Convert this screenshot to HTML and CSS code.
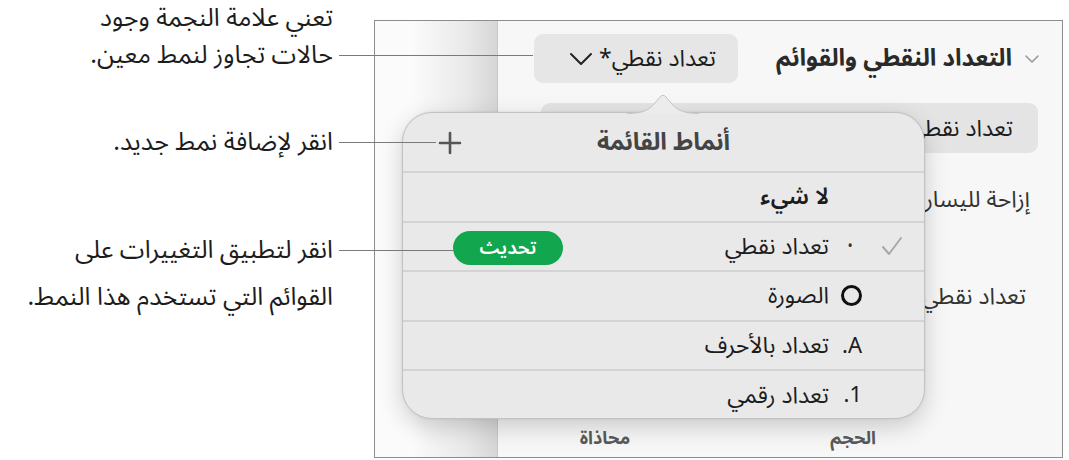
FILE: index.html
```html
<!DOCTYPE html>
<html lang="ar">
<head>
    <meta charset="UTF-8">
    <title>أنماط القائمة</title>
    <link rel="stylesheet" href="styles.css">
</head>
<body>
    <div class="page">
        <div class="notes">
            <div class="note note-star">
                <div class="note-text">تعني علامة النجمة وجود<br>حالات تجاوز لنمط معين.</div>
                <span class="leader leader-star"></span>
            </div>
            <div class="note note-add">
                <div class="note-text">انقر لإضافة نمط جديد.</div>
                <span class="leader leader-add"></span>
            </div>
            <div class="note note-update">
                <div class="note-text">انقر لتطبيق التغييرات على<br>القوائم التي تستخدم هذا النمط.</div>
                <span class="leader leader-update"></span>
            </div>
        </div>

        <div class="frame">
            <div class="sidebar"></div>
            <div class="inspector">
                <div class="section-head">
                    <svg class="section-chevron" width="16" height="10" viewBox="0 0 16 10"><polyline points="2,2 8,8 14,2" fill="none" stroke="#9a9a9a" stroke-width="1.6" stroke-linecap="round" stroke-linejoin="round"/></svg>
                    <span class="section-title">التعداد النقطي والقوائم</span>
                    <div class="style-btn">
                        <span>تعداد نقطي*</span>
                        <svg width="24" height="14" viewBox="0 0 24 14"><polyline points="2,2 12,12 22,2" fill="none" stroke="#222" stroke-width="2" stroke-linecap="round" stroke-linejoin="round"/></svg>
                    </div>
                </div>
                <div class="wide-btn">تعداد نقطي</div>
                <div class="insp-row row-indent">إزاحة لليسار</div>
                <div class="insp-row row-bullet">تعداد نقطي</div>
                <div class="insp-foot">
                    <span>الحجم</span>
                    <span>محاذاة</span>
                </div>
            </div>

            <div class="popover">
                <svg class="popover-arrow" width="72" height="26" viewBox="0 0 72 26">
                    <path d="M0 25.5 C16 25.5 22 22 28 15 L33 9 Q36 5.5 39 9 L44 15 C50 22 56 25.5 72 25.5" fill="#ececec" stroke="#c4c4c4" stroke-width="1"/>
                </svg>
                <div class="pop-head">
                    <svg class="pop-plus" width="26" height="26" viewBox="0 0 26 26"><path d="M13 3 V23 M3 13 H23" stroke="#555" stroke-width="2.6" stroke-linecap="round"/></svg>
                    <span class="pop-title">أنماط القائمة</span>
                </div>
                <div class="pop-row">
                    <span class="check"></span>
                    <span class="marker"></span>
                    <span class="label label-strong">لا شيء</span>
                </div>
                <div class="pop-row">
                    <span class="check">
                        <svg width="22" height="20" viewBox="0 0 22 20"><polyline points="2,11 8,18 20,2" fill="none" stroke="#a8a8a8" stroke-width="2" stroke-linecap="round" stroke-linejoin="round"/></svg>
                    </span>
                    <span class="marker marker-dot">•</span>
                    <span class="label">تعداد نقطي</span>
                    <span class="update-btn">تحديث</span>
                </div>
                <div class="pop-row">
                    <span class="check"></span>
                    <span class="marker"><span class="ring"></span></span>
                    <span class="label">الصورة</span>
                </div>
                <div class="pop-row">
                    <span class="check"></span>
                    <span class="marker">A.</span>
                    <span class="label">تعداد بالأحرف</span>
                </div>
                <div class="pop-row last">
                    <span class="check"></span>
                    <span class="marker">1.</span>
                    <span class="label">تعداد رقمي</span>
                </div>
            </div>
        </div>
    </div>
</body>
</html>
```

FILE: styles.css
```css
:root {
    --ink: #1c1c1c;
    --muted: #555555;
    --leader: #7a7a7a;
    --pop-bg: #e9e9e9;
    --pop-line: #d3d3d3;
    --green: #12a64f;
}

body {
    margin: 0;
    background: #ffffff;
    color: var(--ink);
    font-family: "Noto Sans Arabic", "DejaVu Sans", sans-serif;
}

.page {
    width: 1069px;
    height: 460px;
    display: flex;
    overflow: hidden;
}

/* callouts on the left */
.notes {
    width: 374px;
    flex-shrink: 0;
    position: relative;
    z-index: 3;
}

.note {
    display: flex;
    align-items: flex-end;
    direction: ltr;
}

.note-text {
    width: 333px;
    flex-shrink: 0;
    text-align: right;
    direction: rtl;
    font-size: 25px;
    line-height: 37px;
    white-space: nowrap;
}

.leader {
    display: block;
    height: 1.5px;
    background: var(--leader);
    margin-left: 6px;
    margin-bottom: 18px;
    flex-shrink: 0;
}

.note-star { margin-top: 0; }
.leader-star { width: 194px; }

.note-add { margin-top: 50px; }
.leader-add { width: 97px; }

.note-update { margin-top: 66px; }
.note-update .note-text { line-height: 47px; }
.note-update .leader { margin-bottom: 70px; }
.leader-update { width: 114px; }

/* screenshot frame */
.frame {
    margin-top: 20px;
    width: 689px;
    height: 438px;
    box-sizing: border-box;
    border: 1px solid #8d8d8d;
    display: flex;
    position: relative;
}

.sidebar {
    width: 122px;
    flex-shrink: 0;
    background: linear-gradient(to right, #fbfbfb 30%, #e9e9e9 75%, #d6d6d6);
    border-right: 1px solid #c9c9c9;
}

.inspector {
    flex: 1;
    background: #f7f7f7;
    direction: rtl;
    padding: 13px 22px 0 24px;
    display: flex;
    flex-direction: column;
}

.section-head {
    display: flex;
    align-items: center;
    height: 49px;
    padding-left: 12px;
}

.section-chevron {
    margin-left: 12px;
    flex-shrink: 0;
}

.section-title {
    font-size: 24px;
    font-weight: bold;
    color: #2a2a2a;
}

.style-btn {
    margin-right: auto;
    height: 49px;
    width: 204px;
    box-sizing: border-box;
    background: #e6e6e6;
    border-radius: 9px;
    display: flex;
    align-items: center;
    gap: 6px;
    padding-right: 22px;
    font-size: 23px;
}

.wide-btn {
    margin-top: 20px;
    margin-left: 19px;
    margin-right: 2px;
    height: 50px;
    background: #e4e4e4;
    border-radius: 9px;
    display: flex;
    align-items: center;
    padding-right: 25px;
    font-size: 23px;
}

.insp-row {
    font-size: 23px;
    line-height: 40px;
    padding-right: 10px;
    color: #333333;
}

.row-indent { margin-top: 27px; }
.row-bullet { margin-top: 57px; padding-right: 14px; }

.insp-foot {
    margin-top: auto;
    height: 38px;
    display: flex;
    align-items: center;
    padding-right: 164px;
    gap: 200px;
    font-size: 18px;
    font-weight: bold;
    color: #5a5a5a;
}

/* list styles popover */
.popover {
    position: absolute;
    left: 27px;
    top: 91px;
    width: 523px;
    height: 307px;
    box-sizing: border-box;
    background: var(--pop-bg);
    border: 1px solid #c2c2c2;
    border-radius: 30px;
    box-shadow: 0 8px 24px rgba(0, 0, 0, 0.18), 0 0 3px rgba(0, 0, 0, 0.08);
    direction: rtl;
    z-index: 2;
}

.popover-arrow {
    position: absolute;
    top: -25px;
    left: 224px;
}

.pop-head {
    height: 58px;
    display: flex;
    align-items: center;
    justify-content: center;
    position: relative;
    border-bottom: 2px solid var(--pop-line);
}

.pop-title {
    font-size: 24px;
    font-weight: bold;
    color: #444444;
}

.pop-plus {
    position: absolute;
    left: 34px;
    top: 17px;
}

.pop-row {
    height: 47.6px;
    display: flex;
    align-items: center;
    padding-right: 21px;
    border-bottom: 2px solid var(--pop-line);
    position: relative;
    font-size: 23px;
}

.pop-row.last {
    border-bottom: none;
}

.check {
    width: 22px;
    display: flex;
    justify-content: center;
}

.marker {
    width: 24px;
    margin-right: 19px;
    margin-left: 9px;
    display: flex;
    justify-content: flex-start;
    font-size: 22px;
}

.marker-dot {
    justify-content: center;
    font-size: 14px;
    color: #333333;
}

.ring {
    width: 15px;
    height: 15px;
    border: 3px solid #111111;
    border-radius: 50%;
}

.label-strong {
    font-weight: 600;
}

.update-btn {
    position: absolute;
    left: 50px;
    top: 8px;
    width: 110px;
    height: 34px;
    border-radius: 17px;
    background: var(--green);
    color: #ffffff;
    font-size: 19px;
    font-weight: 600;
    display: flex;
    align-items: center;
    justify-content: center;
}
```
